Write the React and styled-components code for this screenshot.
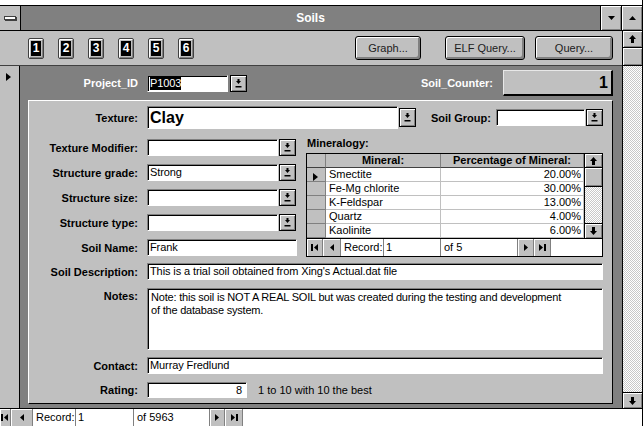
import React from 'react';
import styled, { createGlobalStyle } from 'styled-components';

const GlobalStyle = createGlobalStyle`
  html, body { margin: 0; padding: 0; background: #fff; }
  body { font-family: "Liberation Sans", Arial, sans-serif; font-size: 11px; color: #000; }
  * { box-sizing: border-box; }
`;

const Window = styled.div`
  width: 643px;
  height: 426px;
  overflow: hidden;
  display: flex;
  flex-direction: column;
  background: #fff;
  border-right: 1px solid #000;
`;

const TopStrip = styled.div`
  height: 5px;
  flex: none;
`;

const TitleBar = styled.div`
  height: 26px;
  flex: none;
  display: flex;
  background: #808080;
  border-top: 1px solid #000;
  border-bottom: 1px solid #000;
`;

const SysBox = styled.div`
  width: 21px;
  flex: none;
  border-right: 1px solid #000;
  background: #c0c0c0;
  display: flex;
  align-items: center;
  justify-content: center;
`;

const SysDash = styled.span`
  width: 12px;
  height: 4px;
  background: #fff;
  border: 1px solid #404040;
  box-shadow: 1px 1px 0 #404040;
`;

const Title = styled.div`
  flex: 1;
  display: flex;
  align-items: center;
  justify-content: center;
  color: #fff;
  font-weight: bold;
  font-size: 12px;
`;

const CapBtn = styled.div`
  width: 21px;
  flex: none;
  border-left: 1px solid #000;
  background: #c0c0c0;
  box-shadow: inset 1px 1px 0 #fff, inset -1px -1px 0 #808080;
  display: flex;
  align-items: center;
  justify-content: center;
`;

const Body = styled.div`
  flex: 1;
  display: flex;
  min-height: 0;
`;

const MainCol = styled.div`
  flex: 1;
  display: flex;
  flex-direction: column;
`;

const FormHeader = styled.div`
  height: 35px;
  flex: none;
  display: flex;
  align-items: center;
  background: #c0c0c0;
  border-bottom: 1px solid #404040;
  padding: 0 9px 0 28px;
`;

const NumGroup = styled.div`
  display: flex;
  gap: 14px;
`;

const NumBtn = styled.div`
  width: 16px;
  height: 21px;
  background: #c0c0c0;
  border: 1px solid #404040;
  border-radius: 2px;
  box-shadow: inset 1px 1px 0 #fff, inset -1px -1px 0 #808080;
  display: flex;
  align-items: center;
  justify-content: center;
`;

const NumFace = styled.span`
  width: 10px;
  height: 15px;
  background: #000;
  color: #fff;
  font-weight: bold;
  font-size: 12px;
  line-height: 15px;
  text-align: center;
`;

const CmdBtn = styled.div`
  width: ${p => p.$w}px;
  height: 24px;
  margin-left: ${p => p.$ml};
  background: #c0c0c0;
  border: 1px solid #000;
  border-radius: 3px;
  box-shadow: inset 1px 1px 0 #fff, inset -2px -2px 0 #808080;
  display: flex;
  align-items: center;
  justify-content: center;
  font-size: 11px;
  color: #202020;
`;

const DetailRow = styled.div`
  flex: 1;
  display: flex;
  min-height: 0;
`;

const Selector = styled.div`
  width: 20px;
  flex: none;
  background: #c0c0c0;
  border-right: 1px solid #000;
  padding: 5px 0 0 6px;
`;

const Detail = styled.div`
  flex: 1;
  background: #808080;
  display: flex;
  flex-direction: column;
  padding: 4px 9px 4px 8px;
`;

const TopRow = styled.div`
  height: 26px;
  flex: none;
  display: flex;
  align-items: center;
`;

const HeadLabel = styled.div`
  width: ${p => p.$w || 'auto'};
  margin-left: ${p => p.$ml || '0'};
  margin-right: ${p => p.$mr || '9px'};
  text-align: right;
  color: #fff;
  font-weight: bold;
  font-size: 11px;
`;

const TextBox = styled.div`
  width: ${p => (p.$w ? `${p.$w}px` : 'auto')};
  flex: ${p => (p.$w ? 'none' : '1')};
  height: ${p => p.$h}px;
  background: #fff;
  border-top: 1px solid #808080;
  border-left: 1px solid #808080;
  border-bottom: 1px solid #fff;
  border-right: 1px solid #fff;
  box-shadow: inset 1px 1px 0 #000;
  display: flex;
  align-items: ${p => (p.$top ? 'flex-start' : 'center')};
  justify-content: ${p => (p.$right ? 'flex-end' : 'flex-start')};
  padding: ${p => (p.$top ? '2px 3px' : '0 4px 0 2px')};
  font-size: 11px;
  line-height: 13px;
  letter-spacing: ${p => (p.$top ? '-0.2px' : '-0.1px')};
  white-space: nowrap;
  overflow: hidden;
`;

const NoteText = styled.span`
  white-space: normal;
`;

const Selected = styled.span`
  background: #000;
  color: #fff;
`;

const BigText = styled.span`
  font-weight: bold;
  font-size: 16px;
  letter-spacing: 0;
`;

const DropBtn = styled.div`
  width: 17px;
  flex: none;
  height: ${p => p.$h}px;
  margin-left: ${p => p.$ml || 0}px;
  background: #c0c0c0;
  border: 1px solid #000;
  box-shadow: inset 1px 1px 0 #fff, inset -1px -1px 0 #808080;
  display: flex;
  align-items: center;
  justify-content: center;
`;

const CounterBox = styled.div`
  width: 110px;
  height: 26px;
  background: #c0c0c0;
  border-top: 1px solid #e8e8e8;
  border-left: 1px solid #e8e8e8;
  border-bottom: 2px solid #000;
  border-right: 2px solid #000;
  display: flex;
  align-items: center;
  justify-content: flex-end;
  padding-right: 3px;
  font-weight: bold;
  font-size: 16px;
`;

const Panel = styled.div`
  flex: 1;
  margin-top: 4px;
  background: #c0c0c0;
  border-top: 1px solid #fff;
  border-left: 1px solid #fff;
  border-bottom: 1px solid #000;
  border-right: 1px solid #000;
  display: flex;
  flex-direction: column;
  padding: 5px 9px 0 0;
`;

const Row = styled.div`
  display: flex;
  align-items: ${p => (p.$top ? 'flex-start' : 'center')};
  margin-top: ${p => p.$mt || 0}px;
`;

const Label = styled.div`
  width: ${p => p.$w || '109px'};
  flex: none;
  margin-left: ${p => p.$ml || 0}px;
  margin-right: ${p => p.$mr ?? 9}px;
  padding-top: ${p => p.$pt || 0}px;
  text-align: right;
  font-weight: bold;
  font-size: 11px;
  white-space: nowrap;
`;

const Hint = styled.span`
  margin-left: 11px;
  font-size: 11px;
`;

const Middle = styled.div`
  display: flex;
  align-items: flex-start;
  margin-top: 10px;
`;

const LeftCol = styled.div`
  width: 268px;
  display: flex;
  flex-direction: column;
  gap: 8px;
`;

const RightCol = styled.div`
  width: 297px;
  margin-left: 9px;
  margin-top: -3px;
  display: flex;
  flex-direction: column;
`;

const SubTitle = styled.div`
  font-weight: bold;
  font-size: 11px;
  line-height: 14px;
  padding-left: 1px;
`;

const Subform = styled.div`
  margin-top: 3px;
  border: 1px solid #000;
  background: #fff;
  display: flex;
  flex-direction: column;
`;

const SubMain = styled.div`
  display: flex;
`;

const Grid = styled.div`
  display: grid;
  grid-template-columns: 19px 115px 143px;
  grid-auto-rows: 14px;
`;

const HeadCell = styled.div`
  background: #c0c0c0;
  border-right: 1px solid #808080;
  border-bottom: 1px solid #404040;
  font-weight: bold;
  font-size: 11px;
  line-height: 13px;
  text-align: center;
`;

const SelCell = styled.div`
  background: #c0c0c0;
  border-right: 1px solid #808080;
  border-bottom: 1px solid #808080;
  padding: 3px 0 0 6px;
`;

const Cell = styled.div`
  background: #fff;
  border-right: 1px solid #c0c0c0;
  border-bottom: 1px solid #c0c0c0;
  font-size: 11px;
  line-height: 13px;
  padding: 0 ${p => (p.$right ? '2px' : '3px')};
  text-align: ${p => (p.$right ? 'right' : 'left')};
  white-space: nowrap;
`;

const SubScroll = styled.div`
  width: 18px;
  border-left: 1px solid #000;
  display: flex;
  flex-direction: column;
`;

const MainScroll = styled.div`
  width: 20px;
  flex: none;
  border-left: 1px solid #000;
  display: flex;
  flex-direction: column;
`;

const ArrowBtn = styled.div`
  height: ${p => p.$h}px;
  flex: none;
  background: #c0c0c0;
  box-shadow: inset 1px 1px 0 #fff, inset -1px -1px 0 #808080;
  border-top: ${p => (p.$down ? '1px solid #000' : 'none')};
  border-bottom: ${p => (p.$down ? 'none' : '1px solid #000')};
  display: flex;
  align-items: center;
  justify-content: center;
`;

const Thumb = styled.div`
  height: ${p => p.$h}px;
  flex: none;
  background: #c0c0c0;
  border-bottom: 1px solid #000;
  box-shadow: inset 1px 1px 0 #fff, inset -1px -1px 0 #808080;
`;

const Track = styled.div`
  flex: 1;
  background-color: #fff;
  background-image: repeating-conic-gradient(#c8c8c8 0 25%, #fff 0 50%);
  background-size: 2px 2px;
`;

const NavBar = styled.div`
  height: ${p => p.$h}px;
  flex: none;
  display: flex;
  background: #fff;
  border-top: 1px solid #000;
`;

const NavBtn = styled.div`
  width: ${p => p.$w}px;
  flex: none;
  background: #c0c0c0;
  border-right: 1px solid #808080;
  box-shadow: inset 1px 1px 0 #fff;
  display: flex;
  align-items: center;
  justify-content: center;
`;

const NavText = styled.div`
  width: ${p => p.$w}px;
  flex: none;
  background: #fff;
  padding-left: ${p => p.$pl || 3}px;
  border-right: ${p => (p.$sep ? '1px solid #808080' : 'none')};
  font-size: 11px;
  line-height: ${p => p.$lh}px;
  white-space: nowrap;
`;

const BottomNav = styled(NavBar)`
  height: 18px;
`;

const Up = () => (
  <svg width="7" height="8" viewBox="0 0 7 8"><polygon points="3.5,0 7,4 5,4 5,8 2,8 2,4 0,4" fill="#000" /></svg>
);
const Down = () => (
  <svg width="7" height="8" viewBox="0 0 7 8"><polygon points="3.5,8 7,4 5,4 5,0 2,0 2,4 0,4" fill="#000" /></svg>
);
const RecArrow = () => (
  <svg width="5" height="8" viewBox="0 0 5 8"><polygon points="0,0 5,4 0,8" fill="#000" /></svg>
);
const DropGlyph = () => (
  <svg width="7" height="9" viewBox="0 0 7 9">
    <rect x="2.5" y="0" width="2" height="2" fill="#000" />
    <polygon points="1,2 6,2 3.5,5" fill="#000" />
    <rect x="0.5" y="7" width="6" height="1.5" fill="#000" />
  </svg>
);
const NavGlyph = ({ kind }) => (
  <svg width="8" height="7" viewBox="0 0 8 7">
    {kind === 'first' && (<><rect x="0" y="0" width="2" height="7" fill="#000" /><polygon points="7,0 3,3.5 7,7" fill="#000" /></>)}
    {kind === 'prev' && <polygon points="6,0 2,3.5 6,7" fill="#000" />}
    {kind === 'next' && <polygon points="2,0 6,3.5 2,7" fill="#000" />}
    {kind === 'last' && (<><polygon points="1,0 5,3.5 1,7" fill="#000" /><rect x="6" y="0" width="2" height="7" fill="#000" /></>)}
  </svg>
);

const minerals = [
  ['Smectite', '20.00%'],
  ['Fe-Mg chlorite', '30.00%'],
  ['K-Feldspar', '13.00%'],
  ['Quartz', '4.00%'],
  ['Kaolinite', '6.00%'],
];

const comboRows = [
  ['Texture Modifier:', ''],
  ['Structure grade:', 'Strong'],
  ['Structure size:', ''],
  ['Structure type:', ''],
];

export default function App() {
  return (
    <>
      <GlobalStyle />
      <Window>
        <TopStrip />
        <TitleBar>
          <SysBox><SysDash /></SysBox>
          <Title>Soils</Title>
          <CapBtn><svg width="7" height="4" viewBox="0 0 7 4"><polygon points="0,0 7,0 3.5,4" fill="#000" /></svg></CapBtn>
          <CapBtn><svg width="7" height="4" viewBox="0 0 7 4"><polygon points="0,4 7,4 3.5,0" fill="#000" /></svg></CapBtn>
        </TitleBar>
        <Body>
          <MainCol>
            <FormHeader>
              <NumGroup>
                {[1, 2, 3, 4, 5, 6].map(n => (
                  <NumBtn key={n}><NumFace>{n}</NumFace></NumBtn>
                ))}
              </NumGroup>
              <CmdBtn $w={66} $ml="auto">Graph...</CmdBtn>
              <CmdBtn $w={80} $ml="24px">ELF Query...</CmdBtn>
              <CmdBtn $w={78} $ml="10px">Query...</CmdBtn>
            </FormHeader>
            <DetailRow>
              <Selector><RecArrow /></Selector>
              <Detail>
                <TopRow>
                  <HeadLabel $w="110px">Project_ID</HeadLabel>
                  <TextBox $w={81} $h={17}><Selected>P1003</Selected></TextBox>
                  <DropBtn $h={17} $ml={2}><DropGlyph /></DropBtn>
                  <HeadLabel $ml="auto" $mr="10px">Soil_Counter:</HeadLabel>
                  <CounterBox>1</CounterBox>
                </TopRow>
                <Panel>
                  <Row>
                    <Label>Texture:</Label>
                    <TextBox $w={251} $h={23}><BigText>Clay</BigText></TextBox>
                    <DropBtn $h={19} $ml={1}><DropGlyph /></DropBtn>
                    <Label $w="auto" $ml={15} $mr={5}>Soil Group:</Label>
                    <TextBox $w={89} $h={17} />
                    <DropBtn $h={17} $ml={1}><DropGlyph /></DropBtn>
                  </Row>
                  <Middle>
                    <LeftCol>
                      {comboRows.map(([l, v]) => (
                        <Row key={l}>
                          <Label>{l}</Label>
                          <TextBox $w={131} $h={17}>{v}</TextBox>
                          <DropBtn $h={17} $ml={1}><DropGlyph /></DropBtn>
                        </Row>
                      ))}
                      <Row>
                        <Label>Soil Name:</Label>
                        <TextBox $w={150} $h={17}>Frank</TextBox>
                      </Row>
                    </LeftCol>
                    <RightCol>
                      <SubTitle>Mineralogy:</SubTitle>
                      <Subform>
                        <SubMain>
                          <Grid>
                            <HeadCell />
                            <HeadCell>Mineral:</HeadCell>
                            <HeadCell>Percentage of Mineral:</HeadCell>
                            {minerals.map(([m, p], i) => (
                              <React.Fragment key={m}>
                                <SelCell>{i === 0 && <RecArrow />}</SelCell>
                                <Cell>{m}</Cell>
                                <Cell $right>{p}</Cell>
                              </React.Fragment>
                            ))}
                          </Grid>
                          <SubScroll>
                            <ArrowBtn $h={14}><Up /></ArrowBtn>
                            <Thumb $h={19} />
                            <Track />
                            <ArrowBtn $h={15} $down><Down /></ArrowBtn>
                          </SubScroll>
                        </SubMain>
                        <NavBar $h={18}>
                          <NavBtn $w={16}><NavGlyph kind="first" /></NavBtn>
                          <NavBtn $w={18}><NavGlyph kind="prev" /></NavBtn>
                          <NavText $w={43} $lh={17} $sep>Record:</NavText>
                          <NavText $w={57} $lh={17} $pl={2} $sep>1</NavText>
                          <NavText $w={77} $lh={17} $sep>of 5</NavText>
                          <NavBtn $w={16}><NavGlyph kind="next" /></NavBtn>
                          <NavBtn $w={17}><NavGlyph kind="last" /></NavBtn>
                        </NavBar>
                      </Subform>
                    </RightCol>
                  </Middle>
                  <Row $mt={6}>
                    <Label>Soil Description:</Label>
                    <TextBox $h={17}>This is a trial soil obtained from Xing's Actual.dat file</TextBox>
                  </Row>
                  <Row $mt={8} $top>
                    <Label $pt={2}>Notes:</Label>
                    <TextBox $h={62} $top>
                      <NoteText>
                        Note: this soil is NOT A REAL SOIL but was created during the testing and development<br />of the database system.
                      </NoteText>
                    </TextBox>
                  </Row>
                  <Row $mt={7}>
                    <Label>Contact:</Label>
                    <TextBox $h={17}>Murray Fredlund</TextBox>
                  </Row>
                  <Row $mt={8}>
                    <Label>Rating:</Label>
                    <TextBox $w={100} $h={16} $right>8</TextBox>
                    <Hint>1 to 10 with 10 the best</Hint>
                  </Row>
                </Panel>
              </Detail>
            </DetailRow>
          </MainCol>
          <MainScroll>
            <ArrowBtn $h={17}><Up /></ArrowBtn>
            <Thumb $h={18} />
            <Track />
            <ArrowBtn $h={16} $down><Down /></ArrowBtn>
          </MainScroll>
        </Body>
        <BottomNav>
          <NavBtn $w={11}><NavGlyph kind="first" /></NavBtn>
          <NavBtn $w={22}><NavGlyph kind="prev" /></NavBtn>
          <NavText $w={43} $lh={17} $sep>Record:</NavText>
          <NavText $w={58} $lh={17} $pl={2} $sep>1</NavText>
          <NavText $w={76} $lh={17} $sep>of 5963</NavText>
          <NavBtn $w={15}><NavGlyph kind="next" /></NavBtn>
          <NavBtn $w={18}><NavGlyph kind="last" /></NavBtn>
        </BottomNav>
      </Window>
    </>
  );
}
